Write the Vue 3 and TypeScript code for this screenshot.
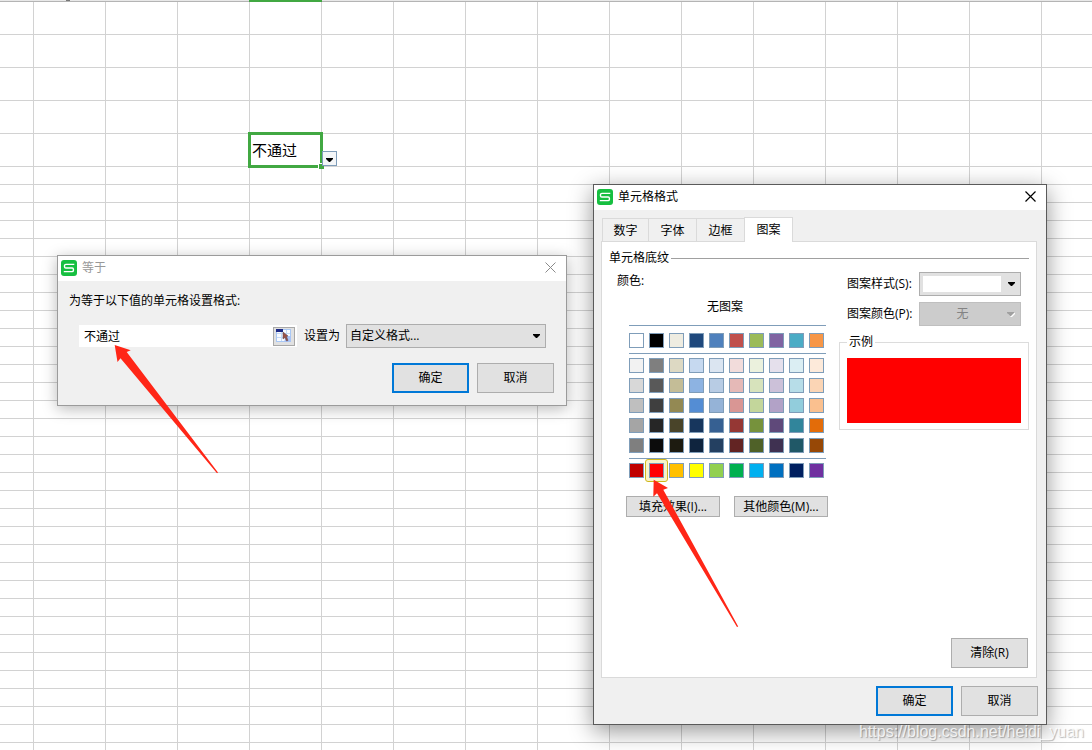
<script setup lang="ts">
import { ref } from 'vue'

const columns = 14
const tallRows = 5
const totalRows = 38
const activeRow = 5
const activeColumn = 4

const cellValue = ref('不通过')
const matchValue = ref('不通过')
const formatChoice = ref('custom')
const patternStyle = ref('solid')
const patternColor = ref('none')
const picked = ref('#ff0000')

const tabs: string[] = ['数字', '字体', '边框', '图案']
const activeTab = ref('图案')

const themeColors: string[] = [
  '#ffffff', '#000000', '#eeece1', '#1f497d', '#4f81bd', '#c0504d', '#9bbb59', '#8064a2', '#4bacc6', '#f79646',
]
const shadeColors: string[] = [
  '#f2f2f2', '#7f7f7f', '#ddd9c3', '#c6d9f0', '#dbe5f1', '#f2dcdb', '#ebf1dd', '#e5e0ec', '#dbeef3', '#fdeada',
  '#d8d8d8', '#595959', '#c4bd97', '#8db3e2', '#b8cce4', '#e5b9b7', '#d7e3bc', '#ccc1d9', '#b7dde8', '#fbd5b5',
  '#bfbfbf', '#3f3f3f', '#938953', '#548dd4', '#95b3d7', '#d99694', '#c3d69b', '#b2a2c7', '#92cddc', '#fac08f',
  '#a5a5a5', '#262626', '#494429', '#17365d', '#366092', '#953734', '#76923c', '#5f497a', '#31859b', '#e36c09',
  '#7f7f7f', '#0c0c0c', '#1d1b10', '#0f243e', '#244061', '#632423', '#4f6128', '#3f3151', '#205867', '#974806',
]
const standardColors: string[] = [
  '#c00000', '#ff0000', '#ffc000', '#ffff00', '#92d050', '#00b050', '#00b0f0', '#0070c0', '#002060', '#7030a0',
]
const palette: string[][] = [themeColors, shadeColors, standardColors]
</script>

<template>
  <main class="desktop">
    <table class="sheet">
      <colgroup>
        <col class="col-first" />
        <col v-for="c in columns" :key="c" class="col" />
        <col />
      </colgroup>
      <thead>
        <tr>
          <th v-for="c in columns + 2" :key="c" :class="{ active: c === activeColumn + 1, marked: c === 2 }"></th>
        </tr>
      </thead>
      <tbody>
        <tr v-for="r in totalRows" :key="r" :class="{ tall: r <= tallRows }">
          <td v-for="c in columns + 2" :key="c" :class="{ selected: r === activeRow && c === activeColumn + 1 }">
            <template v-if="r === activeRow && c === activeColumn + 1">
              {{ cellValue }}
              <span class="frame"></span>
              <span class="handle"></span>
              <button class="cell-drop" type="button" aria-label="下拉列表">
                <svg width="7" height="4" viewBox="0 0 7 4"><path d="M0 0h7v1L4 4H3L0 1z" fill="#000" /></svg>
              </button>
            </template>
          </td>
        </tr>
      </tbody>
    </table>

    <section class="dialog rule" role="dialog" aria-labelledby="rule-title">
      <header class="titlebar">
        <svg class="logo" width="16" height="16" viewBox="0 0 16 16">
          <rect width="16" height="16" rx="3" fill="#16bf40" />
          <path d="M13.3 4.4H4.8Q3.6 4.4 3.5 5.5V6.8Q3.5 8 4.8 8H11.2Q12.4 8 12.4 9.2V10.4Q12.3 11.6 11.1 11.6H2.8" fill="none" stroke="#fff" stroke-width="1.4" />
        </svg>
        <h2 id="rule-title">等于</h2>
        <button class="close" type="button" aria-label="关闭">
          <svg width="11" height="11" viewBox="0 0 11 11"><path d="M.5.5l10 10M10.5.5l-10 10" fill="none" stroke="currentColor" stroke-width="1" /></svg>
        </button>
      </header>
      <div class="rule-body">
        <label for="match">为等于以下值的单元格设置格式:</label>
        <div class="rule-row">
          <div class="range">
            <input id="match" v-model="matchValue" type="text" />
            <button class="picker" type="button" aria-label="选择区域">
              <svg width="16" height="14" viewBox="0 0 16 14">
                <rect x=".5" y=".5" width="14" height="12" fill="#f8fbff" stroke="#a9c8f5" />
                <path d="M1 4.5h13M1 8.5h13M5.5 1v11M10.5 1v11" stroke="#c4daf8" fill="none" />
                <path d="M10 7h5v6H8z" fill="#a9c4f6" />
                <path d="M0 0h7v3H0z" fill="#1d2a86" />
                <path d="M7 3l5 4-1.500.5 1.500 4-1.500.5-1.500-3.500L7 10z" fill="#9c5145" stroke="#5d4750" stroke-width=".5" />
              </svg>
            </button>
          </div>
          <label for="format">设置为</label>
          <div class="combo format">
            <select id="format" v-model="formatChoice">
              <option value="custom">自定义格式...</option>
            </select>
            <svg class="arrow" width="7" height="4" viewBox="0 0 7 4"><path d="M0 0h7v1L4 4H3L0 1z" fill="#000" /></svg>
          </div>
        </div>
        <div class="actions">
          <button class="btn primary" type="button">确定</button>
          <button class="btn" type="button">取消</button>
        </div>
      </div>
    </section>

    <section class="dialog cellformat" role="dialog" aria-labelledby="fmt-title">
      <header class="titlebar">
        <svg class="logo" width="16" height="16" viewBox="0 0 16 16">
          <rect width="16" height="16" rx="3" fill="#16bf40" />
          <path d="M13.3 4.4H4.8Q3.6 4.4 3.5 5.5V6.8Q3.5 8 4.8 8H11.2Q12.4 8 12.4 9.2V10.4Q12.3 11.6 11.1 11.6H2.8" fill="none" stroke="#fff" stroke-width="1.4" />
        </svg>
        <h2 id="fmt-title">单元格格式</h2>
        <button class="close" type="button" aria-label="关闭">
          <svg width="11" height="11" viewBox="0 0 11 11"><path d="M.5.5l10 10M10.5.5l-10 10" fill="none" stroke="currentColor" stroke-width="1.2" /></svg>
        </button>
      </header>
      <div class="fmt-body">
        <nav class="tabs" role="tablist">
          <button
            v-for="t in tabs"
            :key="t"
            type="button"
            role="tab"
            class="tab"
            :class="{ on: t === activeTab }"
            :aria-selected="t === activeTab"
            @click="activeTab = t"
          >{{ t }}</button>
        </nav>
        <div class="panel" role="tabpanel">
          <h3 class="group">单元格底纹</h3>
          <div class="split">
            <div class="left">
              <p class="caption">颜色:</p>
              <button class="nopattern" type="button">无图案</button>
              <div class="palette">
                <div v-for="(group, g) in palette" :key="g" class="swatches">
                  <button
                    v-for="(color, i) in group"
                    :key="i"
                    type="button"
                    class="swatch"
                    :class="{ picked: color === picked }"
                    :style="{ backgroundColor: color }"
                    :aria-label="color"
                    @click="picked = color"
                  ></button>
                </div>
              </div>
              <div class="more">
                <button class="btn small" type="button">填充效果(I)...</button>
                <button class="btn small" type="button">其他颜色(M)...</button>
              </div>
            </div>
            <div class="right">
              <div class="field">
                <label for="pstyle">图案样式(S):</label>
                <div class="combo">
                  <select id="pstyle" v-model="patternStyle" class="preview">
                    <option value="solid"></option>
                  </select>
                  <svg class="arrow" width="7" height="4" viewBox="0 0 7 4"><path d="M0 0h7v1L4 4H3L0 1z" fill="#000" /></svg>
                </div>
              </div>
              <div class="field">
                <label for="pcolor">图案颜色(P):</label>
                <div class="combo">
                  <select id="pcolor" v-model="patternColor" disabled>
                    <option value="none">无</option>
                  </select>
                  <svg class="arrow" width="8" height="5" viewBox="0 0 8 5"><path d="M1 1h7v1L5 5H4L1 2z" fill="#fff" /><path d="M0 0h7v1L4 4H3L0 1z" fill="#a0a0a0" /></svg>
                </div>
              </div>
              <fieldset class="sample">
                <legend>示例</legend>
                <div class="fill" :style="{ backgroundColor: picked }"></div>
              </fieldset>
            </div>
          </div>
          <button class="btn clear" type="button">清除(R)</button>
        </div>
        <div class="actions">
          <button class="btn primary" type="button">确定</button>
          <button class="btn" type="button">取消</button>
        </div>
      </div>
    </section>

    <svg class="pointers" width="1092" height="750" viewBox="0 0 1092 750" aria-hidden="true">
      <path d="M114.700 345L130.700 350.300L126.700 352L218 472.500L217 473.200L120.500 358.300L117.500 362z" />
      <path d="M653.700 479.700L668 488L663.300 489.700L738.200 626.500L737 626.900L657 493.300L653.300 496.700z" />
    </svg>
    <p class="watermark">https://blog.csdn.net/heidi_yuan</p>
  </main>
</template>

<style>
body {
  margin: 0;
}
</style>

<style scoped>
.desktop {
  position: relative;
  height: 100vh;
  overflow: hidden;
  background: #fff;
  color: #000;
  font: 12px/16px "Open Sans", "Noto Sans CJK SC", sans-serif;
}

.desktop *,
.desktop *::before,
.desktop *::after {
  box-sizing: border-box;
}

button,
input,
select {
  margin: 0;
  padding: 0;
  border: 0;
  border-radius: 0;
  background: none;
  color: inherit;
  font: inherit;
}

svg {
  display: block;
}

/* Worksheet */
.sheet {
  width: 100%;
  table-layout: fixed;
  border-collapse: separate;
  border-spacing: 0;
}

.col-first {
  width: 34px;
}

.col {
  width: 72px;
}

.sheet th {
  height: 2px;
  padding: 0;
  border-bottom: 1px solid #b4b4b4;
  background: #e8e8e8;
}

.sheet th.marked {
  background: linear-gradient(#777, #777) 32px 0 / 4px 1px no-repeat #e8e8e8;
}

.sheet th.active {
  border-color: #41a842;
  background: #41a842;
  box-shadow: -1px 0 #41a842;
}

.sheet td {
  height: 18px;
  padding: 0;
  border-right: 1px solid #d2d2d2;
  border-bottom: 1px solid #d2d2d2;
  line-height: 16px;
}

.sheet td:last-child {
  border-right: 0;
}

.sheet .tall td {
  height: 33px;
}

.sheet td.selected {
  position: relative;
  padding-left: 2px;
  font-size: 15px;
}

.frame {
  position: absolute;
  inset: -2px;
  border: 3px solid #41a842;
}

.handle {
  position: absolute;
  right: -3px;
  bottom: -3px;
  width: 6px;
  height: 6px;
  border: solid #fff;
  border-width: 1px 0 0 1px;
  background: #41a842;
}

.cell-drop {
  position: absolute;
  right: -16px;
  bottom: 0;
  display: grid;
  place-items: center;
  width: 15px;
  height: 15px;
  padding-top: 2px;
  border: 1px solid #7f9db9;
  background: #f4f6f8;
}

/* Windows */
.dialog {
  position: absolute;
  border: 1px solid #9b9b9b;
  background: #f0f0f0;
}

.rule {
  left: 57px;
  top: 255px;
  width: 510px;
  box-shadow: 0 3px 14px rgba(0, 0, 0, 0.28);
}

.cellformat {
  left: 593px;
  top: 184px;
  width: 454px;
  border-color: #5a5a5a;
  box-shadow: 0 6px 22px rgba(0, 0, 0, 0.42);
}

.titlebar {
  display: flex;
  align-items: center;
  gap: 5px;
  height: 25px;
  padding: 0 5px 2px 3px;
  background: #fff;
}

.titlebar h2 {
  flex: 1;
  margin: 0;
  font-size: 12px;
  font-weight: 400;
}

.rule .titlebar {
  color: #999;
}

.rule .close {
  color: #8a8a8a;
}

.close {
  display: grid;
  place-items: center;
  width: 21px;
  height: 21px;
}

.btn {
  min-width: 77px;
  height: 30px;
  border: 1px solid #adadad;
  background: #e1e1e1;
  text-align: center;
}

.btn.primary {
  border: 2px solid #0078d7;
}

.btn.small {
  width: 94px;
  height: 21px;
}

.actions {
  display: flex;
  justify-content: flex-end;
  gap: 8px;
}

.combo {
  position: relative;
  width: 102px;
}

.combo select {
  display: block;
  width: 100%;
  height: 24px;
  padding: 0 3px;
  border: 1px solid #adadad;
  background: #e1e1e1;
  appearance: none;
}

.combo select.preview {
  background: linear-gradient(#fff, #fff) 3px 3px / 78px 16px no-repeat #e1e1e1;
}

.combo select:disabled {
  padding-right: 18px;
  border-color: #bfbfbf;
  background: #ccc;
  color: #838383;
  opacity: 1;
  text-align: center;
  text-align-last: center;
}

.arrow {
  position: absolute;
  right: 6px;
  top: 10px;
  pointer-events: none;
}

/* Rule window */
.rule-body {
  padding: 12px 12px 12px 11px;
}

.rule-row {
  display: flex;
  align-items: center;
  margin: 15px 8px 15px 10px;
}

.range {
  display: flex;
  align-items: center;
  flex: 1;
  height: 22px;
  margin-right: 7px;
  padding: 0 2px 0 5px;
  background: #fff;
}

.range input {
  flex: 1;
  min-width: 0;
  height: 20px;
  outline: 0;
}

.picker {
  display: grid;
  place-items: center;
  width: 22px;
  height: 19px;
  border: 1px solid #a8a8a8;
  background: #e1e1e1;
}

.combo.format {
  width: 200px;
  margin-left: 6px;
}

/* Cell format window */
.fmt-body {
  padding: 7px 8px 8px 7px;
}

.tabs {
  display: flex;
  align-items: flex-end;
  padding-left: 1px;
}

.tab {
  width: 48px;
  height: 23px;
  padding-top: 1px;
  border: solid #dadada;
  border-width: 1px 0 0 1px;
}

.tab:first-child {
  width: 46px;
}

.tab.on {
  position: relative;
  width: 49px;
  height: 25px;
  margin-bottom: -1px;
  padding: 0 0 1px;
  border-width: 1px 1px 0;
  background: #fff;
}

.panel {
  display: flex;
  flex-direction: column;
  min-height: 437px;
  margin: 0 1px 8px 0;
  padding: 8px 7px 9px;
  border: 1px solid #dadada;
  background: #fff;
}

.group {
  display: flex;
  align-items: center;
  gap: 2px;
  margin: 0;
  font-size: 12px;
  font-weight: 400;
}

.group::after {
  content: "";
  flex: 1;
  height: 1px;
  background: #a0a0a0;
}

.split {
  display: flex;
  justify-content: space-between;
}

.caption {
  margin: 7px 0 10px 8px;
}

.nopattern {
  display: block;
  width: 192px;
  height: 16px;
  margin: 0 0 10px 20px;
}

.palette {
  width: 197px;
  margin-left: 20px;
}

.swatches {
  display: grid;
  grid-template-columns: repeat(10, 15px);
  gap: 5px;
  padding: 4px 0 5px;
  border-top: 1px solid #7f9db9;
  isolation: isolate;
}

.swatches:first-child {
  padding-top: 7px;
}

.swatch {
  position: relative;
  height: 15px;
  border: 1px solid #7f9db9;
}

.swatch.picked::before {
  content: "";
  position: absolute;
  inset: -5px;
  z-index: -1;
  border: 1px solid #d0b81c;
  border-radius: 3px;
  background: #f7f3cb;
}

.more {
  display: flex;
  gap: 14px;
  margin: 13px 0 0 17px;
}

.right {
  width: 190px;
  padding-top: 6px;
}

.field {
  display: flex;
  align-items: center;
  justify-content: space-between;
  margin: 0 8px 6px;
}

.field label {
  white-space: nowrap;
}

.sample {
  min-width: 0;
  margin: 8px 0 0;
  padding: 8px 7px 6px;
  border: 1px solid #dcdcdc;
}

.sample legend {
  padding: 0 2px;
}

.fill {
  height: 65px;
}

.clear {
  align-self: flex-end;
  margin: auto 1px 0 0;
}

/* Overlays */
.pointers {
  position: absolute;
  left: 0;
  top: 0;
  fill: #ff2617;
  pointer-events: none;
}

.watermark {
  position: absolute;
  right: 8px;
  bottom: 8px;
  margin: 0;
  color: rgba(255, 255, 255, 0.8);
  font: 16px/20px "Liberation Sans", Arial, sans-serif;
  text-shadow: 1px 1px 1px rgba(0, 0, 0, 0.28);
}
</style>
